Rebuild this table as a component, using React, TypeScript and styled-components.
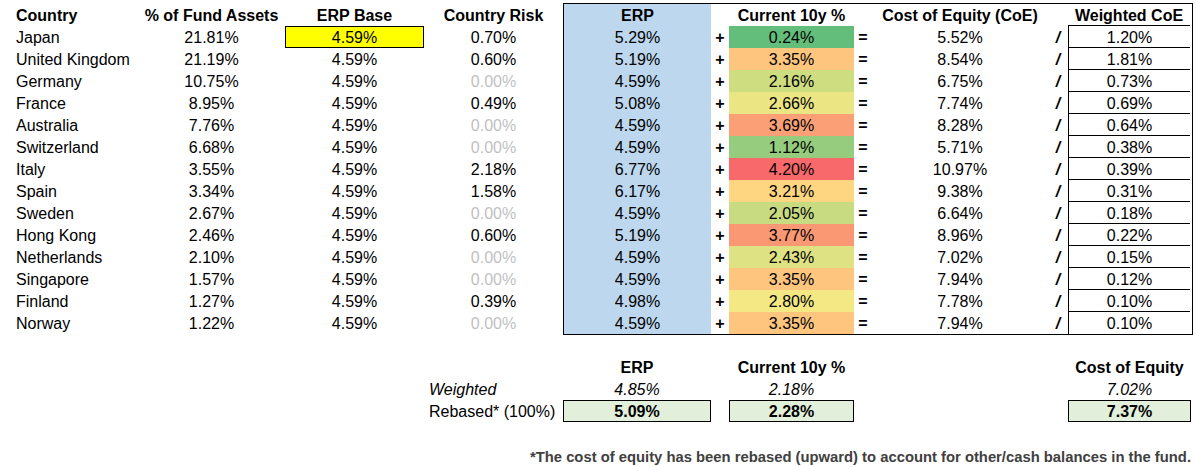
import React from 'react';
import styled, {createGlobalStyle} from 'styled-components';

type Row = {
  country: string;
  fund: string;
  base: string;
  risk: string;
  erp: string;
  tenY: number;
  coe: string;
  weighted: string;
};

const rows: Row[] = [
  {country: 'Japan', fund: '21.81%', base: '4.59%', risk: '0.70%', erp: '5.29%', tenY: 0.24, coe: '5.52%', weighted: '1.20%'},
  {country: 'United Kingdom', fund: '21.19%', base: '4.59%', risk: '0.60%', erp: '5.19%', tenY: 3.35, coe: '8.54%', weighted: '1.81%'},
  {country: 'Germany', fund: '10.75%', base: '4.59%', risk: '0.00%', erp: '4.59%', tenY: 2.16, coe: '6.75%', weighted: '0.73%'},
  {country: 'France', fund: '8.95%', base: '4.59%', risk: '0.49%', erp: '5.08%', tenY: 2.66, coe: '7.74%', weighted: '0.69%'},
  {country: 'Australia', fund: '7.76%', base: '4.59%', risk: '0.00%', erp: '4.59%', tenY: 3.69, coe: '8.28%', weighted: '0.64%'},
  {country: 'Switzerland', fund: '6.68%', base: '4.59%', risk: '0.00%', erp: '4.59%', tenY: 1.12, coe: '5.71%', weighted: '0.38%'},
  {country: 'Italy', fund: '3.55%', base: '4.59%', risk: '2.18%', erp: '6.77%', tenY: 4.2, coe: '10.97%', weighted: '0.39%'},
  {country: 'Spain', fund: '3.34%', base: '4.59%', risk: '1.58%', erp: '6.17%', tenY: 3.21, coe: '9.38%', weighted: '0.31%'},
  {country: 'Sweden', fund: '2.67%', base: '4.59%', risk: '0.00%', erp: '4.59%', tenY: 2.05, coe: '6.64%', weighted: '0.18%'},
  {country: 'Hong Kong', fund: '2.46%', base: '4.59%', risk: '0.60%', erp: '5.19%', tenY: 3.77, coe: '8.96%', weighted: '0.22%'},
  {country: 'Netherlands', fund: '2.10%', base: '4.59%', risk: '0.00%', erp: '4.59%', tenY: 2.43, coe: '7.02%', weighted: '0.15%'},
  {country: 'Singapore', fund: '1.57%', base: '4.59%', risk: '0.00%', erp: '4.59%', tenY: 3.35, coe: '7.94%', weighted: '0.12%'},
  {country: 'Finland', fund: '1.27%', base: '4.59%', risk: '0.39%', erp: '4.98%', tenY: 2.8, coe: '7.78%', weighted: '0.10%'},
  {country: 'Norway', fund: '1.22%', base: '4.59%', risk: '0.00%', erp: '4.59%', tenY: 3.35, coe: '7.94%', weighted: '0.10%'},
];

// excel style 3 colour scale: green -> yellow (median) -> red
const scaleColor = (v: number) => {
  const sorted = rows.map(r => r.tenY).sort((a, b) => a - b);
  const min = sorted[0];
  const max = sorted[sorted.length - 1];
  const mid = (sorted[6] + sorted[7]) / 2;
  const green = [99, 190, 123];
  const yellow = [255, 235, 132];
  const red = [248, 105, 107];
  const mix = (a: number[], b: number[], t: number) =>
    `rgb(${a.map((c, i) => Math.round(c + (b[i] - c) * t)).join(',')})`;
  if (v <= mid) return mix(green, yellow, (v - min) / (mid - min));
  return mix(yellow, red, (v - mid) / (max - mid));
};

const GlobalStyle = createGlobalStyle`
  body {
    margin: 0;
    background: #ffffff;
    font-family: "Liberation Sans", Arial, sans-serif;
    font-size: 16px;
    color: #000000;
  }
`;

const Sheet = styled.div`
  width: 1196px;
  padding-top: 3px;
`;

const Top = styled.div`
  display: flex;
`;

const LeftGrid = styled.div`
  display: grid;
  grid-template-columns: 138px 147px 139px 139px;
  grid-auto-rows: 22px;
  padding-top: 1px;
`;

const Box = styled.div`
  width: 628px;
  border: 1px solid #000000;
  display: grid;
  grid-template-columns: 147px 18px 125px 18px 176px 20px 122px;
  grid-auto-rows: 22px;
`;

const Cell = styled.div<{$align?: 'left' | 'center'; $bold?: boolean; $muted?: boolean}>`
  display: flex;
  align-items: center;
  justify-content: ${p => (p.$align === 'left' ? 'flex-start' : 'center')};
  padding-left: ${p => (p.$align === 'left' ? '16px' : '0')};
  padding-top: 2px;
  font-weight: ${p => (p.$bold ? 700 : 400)};
  color: ${p => (p.$muted ? '#bfbfbf' : '#000000')};
  white-space: nowrap;
`;

const BaseCell = styled(Cell)<{$highlight?: boolean}>`
  background: ${p => (p.$highlight ? '#ffff00' : 'transparent')};
  border: ${p => (p.$highlight ? '1px solid #000000' : 'none')};
`;

const ErpCell = styled(Cell)`
  background: #bdd7ee;
`;

const Op = styled.div<{$italic?: boolean}>`
  display: flex;
  align-items: center;
  justify-content: center;
  padding-top: 2px;
  font-weight: 700;
  font-style: ${p => (p.$italic ? 'italic' : 'normal')};
`;

const ScaleCell = styled(Cell)`
  background: var(--fill);
`;

const WeightCell = styled(Cell)<{$head?: boolean}>`
  border-left: ${p => (p.$head ? 'none' : '1px solid #000000')};
  border-bottom: 1px solid #000000;
`;

const Summary = styled.div`
  display: grid;
  grid-template-columns: 138px 147px 139px 139px 148px 18px 125px 18px 176px 20px 123px;
  grid-auto-rows: 22px;
  margin-top: 21px;
`;

const Label = styled.div<{$italic?: boolean}>`
  grid-column: 4;
  display: flex;
  align-items: center;
  padding-left: 5px;
  padding-top: 2px;
  font-style: ${p => (p.$italic ? 'italic' : 'normal')};
  white-space: nowrap;
`;

const SumCell = styled.div<{$col: number; $italic?: boolean; $bold?: boolean; $boxed?: boolean}>`
  grid-column: ${p => p.$col};
  display: flex;
  align-items: center;
  justify-content: center;
  padding-top: 2px;
  font-style: ${p => (p.$italic ? 'italic' : 'normal')};
  font-weight: ${p => (p.$bold ? 700 : 400)};
  background: ${p => (p.$boxed ? '#e2efda' : 'transparent')};
  border: ${p => (p.$boxed ? '1px solid #000000' : 'none')};
  white-space: nowrap;
`;

const Footnote = styled.div`
  margin-top: 22px;
  height: 22px;
  width: 1191px;
  display: flex;
  align-items: center;
  justify-content: flex-end;
  padding-top: 2px;
  font-size: 14.8px;
  font-weight: 700;
  color: #404040;
`;

const App = () => {
  return (
    <Sheet>
      <GlobalStyle />
      <Top>
        <LeftGrid>
          <Cell $align="left" $bold>Country</Cell>
          <Cell $bold>% of Fund Assets</Cell>
          <Cell $bold>ERP Base</Cell>
          <Cell $bold>Country Risk</Cell>
          {rows.map((r, i) => (
            <React.Fragment key={r.country}>
              <Cell $align="left">{r.country}</Cell>
              <Cell>{r.fund}</Cell>
              <BaseCell $highlight={i === 0}>{r.base}</BaseCell>
              <Cell $muted={r.risk === '0.00%'}>{r.risk}</Cell>
            </React.Fragment>
          ))}
        </LeftGrid>
        <Box>
          <ErpCell $bold>ERP</ErpCell>
          <Op />
          <Cell $bold>Current 10y %</Cell>
          <Op />
          <Cell $bold>Cost of Equity (CoE)</Cell>
          <Op />
          <WeightCell $bold $head>Weighted CoE</WeightCell>
          {rows.map((r, i) => (
            <React.Fragment key={r.country}>
              <ErpCell>{r.erp}</ErpCell>
              <Op>+</Op>
              <ScaleCell style={{'--fill': scaleColor(r.tenY)} as React.CSSProperties}>
                {r.tenY.toFixed(2)}%
              </ScaleCell>
              <Op>=</Op>
              <Cell>{r.coe}</Cell>
              <Op $italic>/</Op>
              <WeightCell style={i === rows.length - 1 ? {borderBottom: 'none'} : undefined}>
                {r.weighted}
              </WeightCell>
            </React.Fragment>
          ))}
        </Box>
      </Top>
      <Summary>
        <SumCell $col={5} $bold>ERP</SumCell>
        <SumCell $col={7} $bold>Current 10y %</SumCell>
        <SumCell $col={11} $bold>Cost of Equity</SumCell>
        <Label $italic>Weighted</Label>
        <SumCell $col={5} $italic>4.85%</SumCell>
        <SumCell $col={7} $italic>2.18%</SumCell>
        <SumCell $col={11} $italic>7.02%</SumCell>
        <Label>Rebased* (100%)</Label>
        <SumCell $col={5} $bold $boxed>5.09%</SumCell>
        <SumCell $col={7} $bold $boxed>2.28%</SumCell>
        <SumCell $col={11} $bold $boxed>7.37%</SumCell>
      </Summary>
      <Footnote>*The cost of equity has been rebased (upward) to account for other/cash balances in the fund.</Footnote>
    </Sheet>
  );
};

export default App;
